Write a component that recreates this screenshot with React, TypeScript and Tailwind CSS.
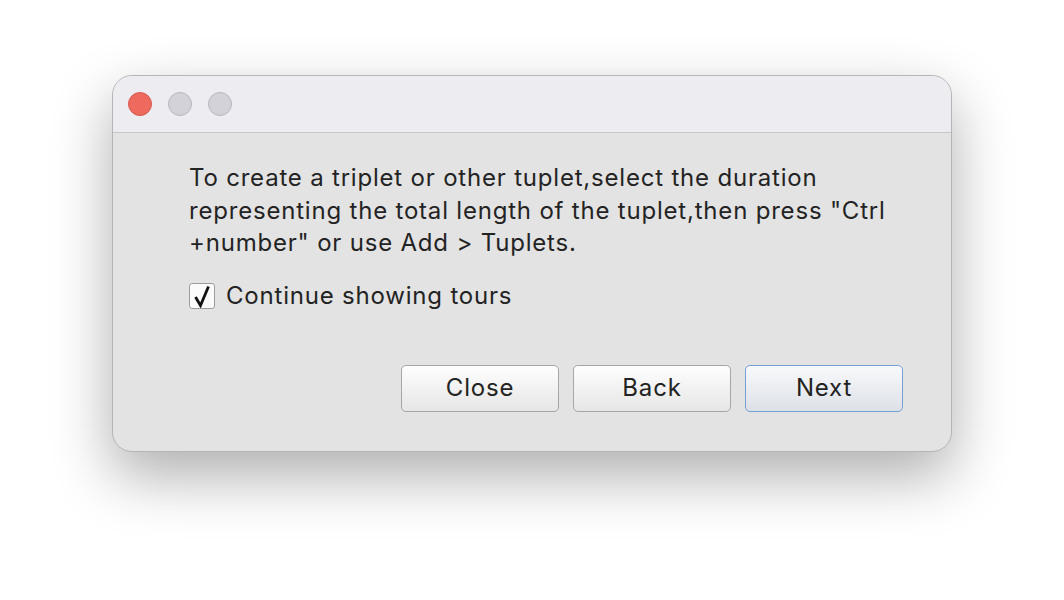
const BUTTONS = ["Close", "Back", "Next"];

function TrafficLight({ color }: { color: "red" | "grey" }) {
  return (
    <span
      className={
        color === "red"
          ? "h-6 w-6 rounded-full border border-[#d6584c] bg-[#ee6a5f]"
          : "h-6 w-6 rounded-full border border-[#b8b7bd] bg-[#d3d2d8]"
      }
    />
  );
}

export default function App() {
  return (
    <div className="flex min-h-[600px] w-full justify-center bg-white pt-[75px] font-['Inter',sans-serif] text-[#232323]">
      <div className="flex h-[377px] w-[840px] flex-col overflow-hidden rounded-[20px] border border-[#b5b5b5] bg-[#e3e3e3] shadow-[0_24px_60px_rgba(0,0,0,0.32)]">
        {/* Title bar */}
        <div className="flex h-[57px] shrink-0 items-center gap-4 border-b border-[#c6c6c9] bg-[#edecf1] pl-[15px]">
          <TrafficLight color="red" />
          <TrafficLight color="grey" />
          <TrafficLight color="grey" />
        </div>

        {/* Body */}
        <div className="flex flex-1 flex-col pl-[76px] pr-[48px] pt-[29px] text-[24px] tracking-[0.8px]">
          <p className="leading-[32.5px]">
            To create a triplet or other tuplet,select the duration
            <br />
            representing the total length of the tuplet,then press "Ctrl
            <br />
            +number" or use Add &gt; Tuplets.
          </p>

          <label className="mt-[20px] flex items-center gap-[11px] leading-[32px]">
            <span className="h-[26px] w-[26px] rounded-[3px] border border-[#9d9d9d] bg-[#fbfbfb]">
              <svg viewBox="0 0 24 24" className="h-6 w-6">
                <path
                  d="M5.5 13 L10.5 21.5 L18.5 2.5"
                  fill="none"
                  stroke="#111"
                  strokeWidth={2.8}
                  strokeLinejoin="miter"
                />
              </svg>
            </span>
            Continue showing tours
          </label>

          <div className="mt-[53px] flex justify-end gap-[14px]">
            {BUTTONS.map((b) => (
              <button
                key={b}
                className={
                  b === "Next"
                    ? "h-[47px] w-[158px] rounded-[5px] border-[1.5px] border-[#74a0d4] bg-gradient-to-b from-[#f8f9fb] to-[#dde1e7] text-[#232323]"
                    : "h-[47px] w-[158px] rounded-[5px] border-[1.5px] border-[#a6a6a6] bg-gradient-to-b from-[#fefefe] to-[#e6e6e6] text-[#232323]"
                }
              >
                {b}
              </button>
            ))}
          </div>
        </div>
      </div>
    </div>
  );
}
